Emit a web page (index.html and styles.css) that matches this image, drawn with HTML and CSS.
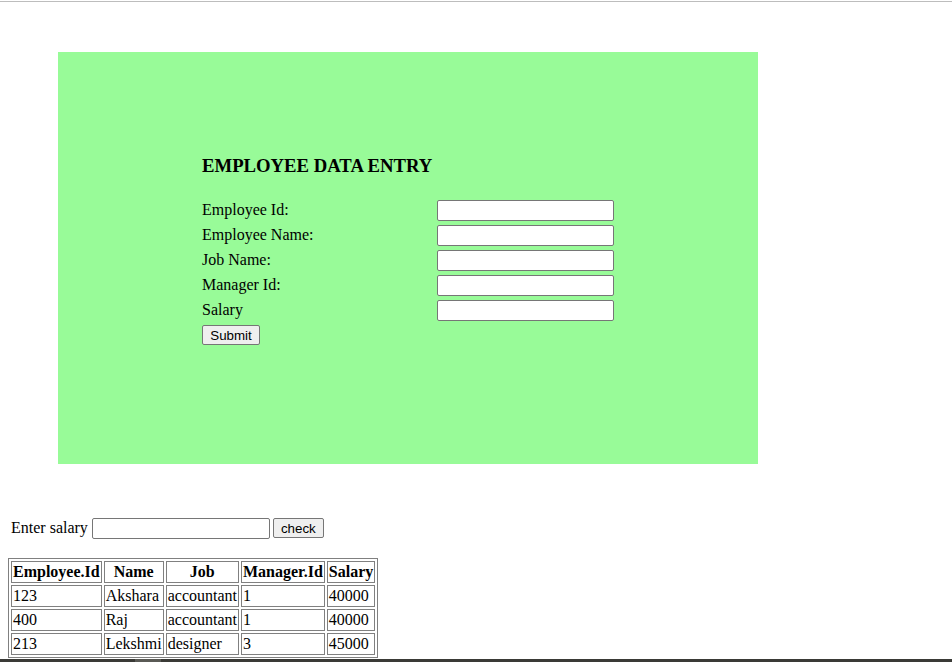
FILE: index.html
```html
<!DOCTYPE html>
<html>
<head>
<meta charset="utf-8">
<title>Employee</title>
<link rel="stylesheet" href="styles.css">
</head>
<body>
<div class="topline"></div>
<div class="page">
  <div class="panel">
    <h3 class="title">EMPLOYEE DATA ENTRY</h3>
    <form class="entry">
      <label class="lbl">Employee Id:</label><input class="field" type="text">
      <label class="lbl">Employee Name:</label><input class="field" type="text">
      <label class="lbl">Job Name:</label><input class="field" type="text">
      <label class="lbl">Manager Id:</label><input class="field" type="text">
      <label class="lbl">Salary</label><input class="field" type="text">
    </form>
    <button class="btn submit" type="button">Submit</button>
  </div>
  <div class="check-row">
    <span class="check-label">Enter salary</span>
    <input class="field salary" type="text">
    <button class="btn check" type="button">check</button>
  </div>
  <table class="emp">
    <tr><th>Employee.Id</th><th>Name</th><th>Job</th><th>Manager.Id</th><th>Salary</th></tr>
    <tr><td>123</td><td>Akshara</td><td>accountant</td><td>1</td><td>40000</td></tr>
    <tr><td>400</td><td>Raj</td><td>accountant</td><td>1</td><td>40000</td></tr>
    <tr><td>213</td><td>Lekshmi</td><td>designer</td><td>3</td><td>45000</td></tr>
  </table>
</div>
<div class="taskbar"><span class="tb-seg"></span></div>
</body>
</html>
```
FILE: styles.css
```css
html, body {
  margin: 0;
  padding: 0;
  background: #ffffff;
  font-family: "Liberation Serif", "Times New Roman", serif;
  font-size: 16px;
  color: #000;
  overflow: hidden;
}
.topline {
  height: 1px;
  margin-top: 1px;
  background: #bdbdbd;
}
.page {
  padding: 0 8px;
}
.panel {
  margin: 50px 0 0 50px;
  width: 700px;
  height: 412px;
  box-sizing: border-box;
  padding: 103px 0 0 144px;
  background: #98fb98;
}
.title {
  margin: 0 0 22px 0;
  font-size: 18.72px;
  font-weight: bold;
  line-height: 21px;
}
.entry {
  display: grid;
  grid-template-columns: 235px 177px;
  grid-auto-rows: 25px;
  align-items: center;
  margin: 0;
}
.lbl {
  line-height: 18px;
  margin-bottom: 2px;
}
.field {
  box-sizing: border-box;
  width: 177px;
  height: 21px;
  margin: 0;
  padding: 1px 2px;
  border: 1px solid #767676;
  border-radius: 2px;
  background: #fff;
  font-family: "Liberation Sans", Arial, sans-serif;
  font-size: 13.33px;
}
.btn {
  box-sizing: border-box;
  height: 20px;
  margin: 0;
  padding: 0 6px;
  border: 1px solid #767676;
  border-radius: 2px;
  background: #efefef;
  font-family: "Liberation Sans", Arial, sans-serif;
  font-size: 13.33px;
  color: #000;
}
.submit {
  display: block;
  margin-top: 2px;
  width: 58px;
}
.check-row {
  display: flex;
  align-items: center;
  height: 22px;
  margin-top: 53px;
  padding-left: 3px;
}
.check-label {
  margin-right: 4px;
}
.salary {
  width: 178px;
}
.check {
  width: 51px;
  margin-left: 3px;
}
.emp {
  margin-top: 19px;
  border: 1px solid #808080;
  border-spacing: 2px;
}
.emp th, .emp td {
  border: 1px solid #808080;
  padding: 1px;
  text-align: left;
  line-height: 18px;
}
.emp th {
  text-align: center;
  font-weight: bold;
}
.taskbar {
  position: fixed;
  left: 0;
  right: 0;
  bottom: 0;
  height: 3px;
  background: #3a3a36;
}
.tb-seg {
  display: block;
  margin-left: 135px;
  width: 26px;
  height: 3px;
  background: #5a5a55;
}
```
